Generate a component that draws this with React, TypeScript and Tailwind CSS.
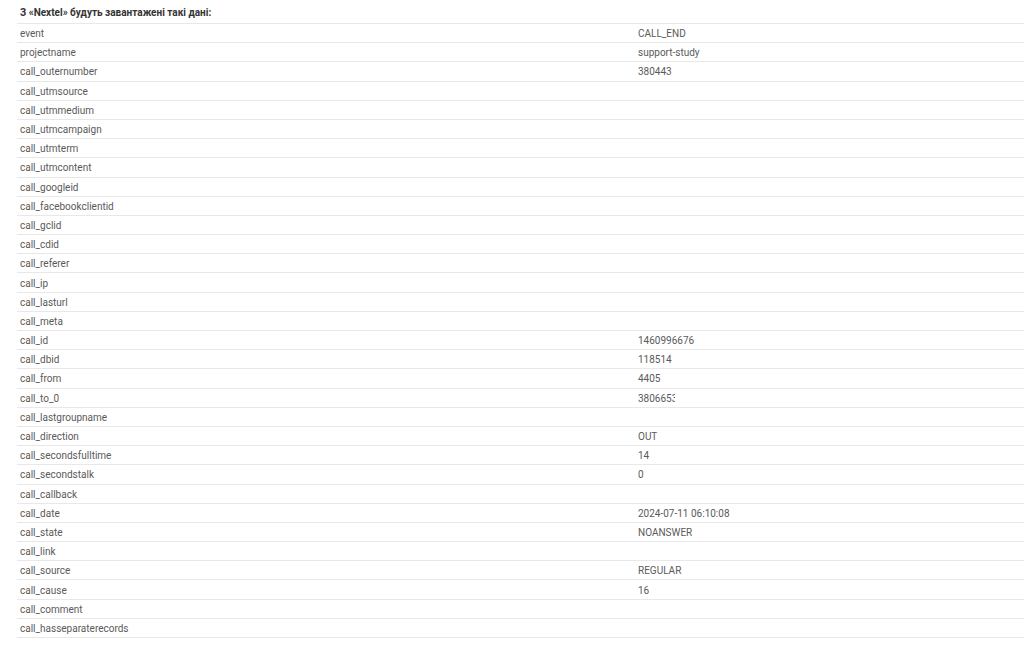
const rows: [string, string][] = [
  ["event", "CALL_END"],
  ["projectname", "support-study"],
  ["call_outernumber", "380443"],
  ["call_utmsource", ""],
  ["call_utmmedium", ""],
  ["call_utmcampaign", ""],
  ["call_utmterm", ""],
  ["call_utmcontent", ""],
  ["call_googleid", ""],
  ["call_facebookclientid", ""],
  ["call_gclid", ""],
  ["call_cdid", ""],
  ["call_referer", ""],
  ["call_ip", ""],
  ["call_lasturl", ""],
  ["call_meta", ""],
  ["call_id", "1460996676"],
  ["call_dbid", "118514"],
  ["call_from", "4405"],
  ["call_to_0", "3806653"],
  ["call_lastgroupname", ""],
  ["call_direction", "OUT"],
  ["call_secondsfulltime", "14"],
  ["call_secondstalk", "0"],
  ["call_callback", ""],
  ["call_date", "2024-07-11 06:10:08"],
  ["call_state", "NOANSWER"],
  ["call_link", ""],
  ["call_source", "REGULAR"],
  ["call_cause", "16"],
  ["call_comment", ""],
  ["call_hasseparaterecords", ""],
];

export default function App() {
  return (
    <div className="h-[647px] w-[1024px] overflow-hidden bg-white pl-[17px] font-['Roboto',sans-serif] text-[10px] text-[#5a5a5a]">
      <div className="flex h-[23px] items-center pl-[3px] pt-[1px] font-bold text-[#333]">
        З «Nextel» будуть завантажені такі дані:
      </div>
      <div className="border-t border-[#e8e8e8]">
        {rows.map(([key, value]) => (
          <div key={key} className="flex h-[19.2px] items-center border-b border-[#e8e8e8] pt-[1px]">
            <div className="w-[618px] pl-[3px]">{key}</div>
            <div className="pl-[3px]">
              {key === "call_to_0" ? (
                <span className="block w-[37px] overflow-hidden whitespace-nowrap">{value}</span>
              ) : (
                value
              )}
            </div>
          </div>
        ))}
      </div>
    </div>
  );
}
